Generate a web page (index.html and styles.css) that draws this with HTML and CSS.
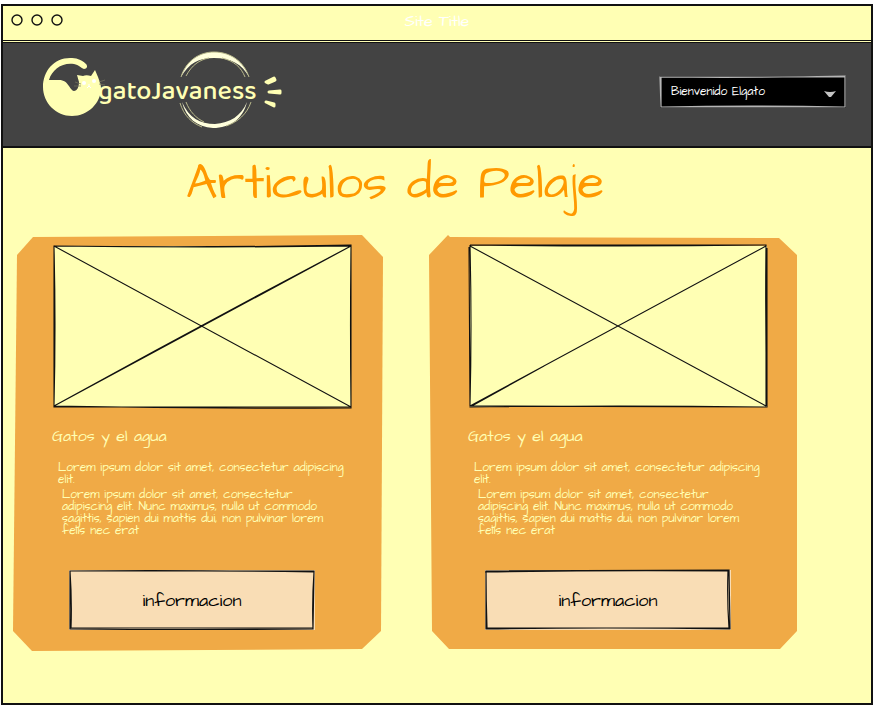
FILE: index.html
```html
<!DOCTYPE html>
<html lang="es">
<head>
<meta charset="utf-8">
<meta name="viewport" content="width=device-width, initial-scale=1">
<title>Articulos de Pelaje</title>
<link rel="stylesheet" href="styles.css">
</head>
<body>
<div class="window">
  <div class="titlebar">
    <svg class="dots" width="54" height="14" viewBox="0 0 54 14" aria-hidden="true">
      <circle cx="7" cy="6" r="5"/>
      <circle cx="27" cy="6" r="5"/>
      <circle cx="47" cy="6" r="5"/>
    </svg>
    <span class="site-title">Site Title</span>
  </div>

  <header class="header">
    <svg class="logo" width="244" height="84" viewBox="40 48 244 84" role="img" aria-label="gatoJavaness">
      <path class="cream" d="M49 80C52 69 63 62 74 64C79 65 81 68 84 69C87 69 88 66 86 64C81 59 76 58 70 58C54 58 43 71 43 87C43 103 56 116 72 116C88 116 101 103 101 88C101 84 99 80 98 77L95 70L91 76C88 75 85 75 83 76L77 75L79 82C79 87 77 91 74 91C69 90 69 80 59 80Z"/>
      <path class="whisker" d="M81 84L75 82M81 86L74 86M99 82L105 80M99 84L105 85"/>
      <circle class="white" cx="84" cy="83" r="2"/>
      <circle class="white" cx="94" cy="81" r="2"/>
      <path class="mouth" d="M88 85L90 85M89 86L87 88M89 86L91 88"/>
      <path class="ring" d="M181 77C186 61 199 52 214 52C231 52 244 62 249 77C242 64 231 58 214 58C199 58 189 63 181 77Z"/>
      <path class="ring-line" d="M181 77C186 61 199 52 214 52C231 52 244 62 249 77M186 76C192 65 199 60 209 58M222 58C234 61 241 67 245 77"/>
      <path class="ring" d="M182 102C189 118 200 124 215 124C230 123 241 116 247 102C243 119 230 128 213 128C197 127 186 118 182 102Z"/>
      <path class="ring-line" d="M180 103C184 116 192 123 202 127M186 102C190 112 196 118 204 122M226 126C238 122 247 114 251 102"/>
      <text class="logo-text" x="98" y="99">gatoJavaness</text>
      <path class="ray" d="M266 82L274 78L275 80L268 83ZM269 92L280 91L280 93ZM266 102L274 104L274 106Z"/>
    </svg>

    <div class="picker">
      <select class="picker-select" aria-label="Usuario">
        <option>Bienvenido Elgato</option>
      </select>
      <svg class="picker-arrow" width="12" height="7" viewBox="0 0 12 7" aria-hidden="true"><path d="M0 0Q6 2 12 0L7 6H5Z"/></svg>
      <svg class="sketch sketch-light" viewBox="0 0 186 32" preserveAspectRatio="none" aria-hidden="true"><path d="M0 1L185 1L185 31L1 31ZM1 1Q95 2 185 0L185 31Q90 29 1 31Z"/></svg>
    </div>
  </header>

  <main class="content">
    <h1 class="heading">Articulos de Pelaje</h1>
    <div class="cards">
      <article class="card">
        <svg class="card-shape" viewBox="0 0 370 416" preserveAspectRatio="none" aria-hidden="true"><path d="M20 2L349 0L370 22L368 396L349 414L19 416L0 396L4 20Z"/></svg>
        <svg class="media" viewBox="0 0 299 164" role="img" aria-label="Imagen">
          <path class="media-fill" d="M1 1H298V162H1Z"/>
          <path class="media-line" d="M1 1Q150 3 298 1Q297 80 298 163Q150 164 1 161Q3 80 1 1ZM1 1Q150 3 298 0L298 162L1 162ZM1 1L298 162M1 161Q150 79 298 1M1 161Q150 81 298 1"/>
        </svg>
        <h2 class="card-title">Gatos y el agua</h2>
        <p class="lead">Lorem ipsum dolor sit amet, consectetur adipiscing<br>elit.</p>
        <p class="body-text">Lorem ipsum dolor sit amet, consectetur<br>adipiscing elit. Nunc maximus, nulla ut commodo<br>sagittis, sapien dui mattis dui, non pulvinar lorem<br>felis nec erat</p>
        <button class="action" type="button">informacion
          <svg class="sketch" viewBox="0 0 246 60" preserveAspectRatio="none" aria-hidden="true"><path d="M1 1Q120 0 245 2Q243 30 244 59Q120 60 1 59ZM1 1L245 1L244 58L2 58Q3 30 1 1Z"/></svg>
        </button>
      </article>

      <article class="card">
        <svg class="card-shape" viewBox="0 0 370 416" preserveAspectRatio="none" aria-hidden="true"><path d="M19 0L21 2L350 3L368 20L368 396L351 414L20 414L3 396L0 20Z"/></svg>
        <svg class="media" viewBox="0 0 299 164" role="img" aria-label="Imagen">
          <path class="media-fill" d="M1 1H298V162H1Z"/>
          <path class="media-line" d="M1 0L297 0Q296 80 298 162Q150 160 1 162L0 2M1 0Q150 2 297 0L297 161M298 3L298 162L1 161Q3 80 1 0M1 1L297 161M1 161L297 1M1 162L75 121"/>
        </svg>
        <h2 class="card-title">Gatos y el agua</h2>
        <p class="lead">Lorem ipsum dolor sit amet, consectetur adipiscing<br>elit.</p>
        <p class="body-text">Lorem ipsum dolor sit amet, consectetur<br>adipiscing elit. Nunc maximus, nulla ut commodo<br>sagittis, sapien dui mattis dui, non pulvinar lorem<br>felis nec erat</p>
        <button class="action" type="button">informacion
          <svg class="sketch" viewBox="0 0 246 60" preserveAspectRatio="none" aria-hidden="true"><path d="M1 1L244 0L245 59Q120 57 1 59ZM0 2Q120 0 243 1Q242 30 244 58L2 58Q1 30 1 1"/></svg>
        </button>
      </article>
    </div>
  </main>
</div>
</body>
</html>
```
FILE: styles.css
```css
* {
  box-sizing: border-box;
}

body {
  margin: 0;
  padding: 4px 2px 2px 1px;
  background: #fff;
  font-family: "Architects Daughter", Lato, sans-serif;
}

.window {
  min-height: calc(100vh - 6px);
  border: 2px solid #111;
  background: #ffffb4;
}

.titlebar {
  display: grid;
  grid-template-columns: 1fr auto 1fr;
  align-items: center;
  height: 35px;
  padding: 0 7px 4px;
  border-bottom: 1px solid #111;
}

.dots {
  fill: none;
  stroke: #111;
  stroke-width: 1.4;
}

.site-title {
  color: #fff;
  font-size: 16px;
  line-height: 20px;
}

.header {
  display: flex;
  align-items: center;
  justify-content: space-between;
  height: 106px;
  margin-top: 1px;
  padding: 0 25px 0 37px;
  border-top: 1px solid #111;
  border-bottom: 2px solid #111;
  background: #434343;
}

.logo {
  margin-bottom: 9px;
}

.cream {
  fill: #ffffb4;
}

.white {
  fill: #fff;
}

.whisker {
  fill: none;
  stroke: #77775f;
  stroke-width: 0.7;
}

.mouth {
  fill: none;
  stroke: #fff;
}

.ring {
  fill: #ffffdc;
}

.ring-line {
  fill: none;
  stroke: #b9b98b;
}

.ray {
  fill: #ffffb4;
  stroke: #ffffb4;
  stroke-width: 3;
  stroke-linejoin: round;
}

.logo-text {
  fill: #ffffb4;
  font-family: "Baloo 2", Quicksand, Lato, sans-serif;
  font-size: 27px;
  font-weight: 500;
}

.picker {
  position: relative;
  width: 186px;
  margin-bottom: 6px;
}

.picker-select {
  display: block;
  width: 100%;
  height: 32px;
  padding: 0 28px 0 11px;
  border: 0;
  border-radius: 0;
  background: #000;
  color: #fff;
  font-family: inherit;
  font-size: 12px;
  appearance: none;
}

.picker-arrow {
  position: absolute;
  top: 15px;
  right: 10px;
  fill: #c4c4c4;
  pointer-events: none;
}

.sketch {
  position: absolute;
  inset: 0;
  width: 100%;
  height: 100%;
  overflow: visible;
  fill: none;
  stroke: #111;
  stroke-width: 1.2;
  pointer-events: none;
}

.sketch-light {
  stroke: #b5b5b5;
}

.content {
  padding: 0 72px 50px 10px;
}

.heading {
  margin: 0;
  padding-left: 50px;
  padding-right: 72px;
  color: #ff9900;
  font-size: 49px;
  font-weight: 400;
  line-height: 72px;
  text-align: center;
}

.cards {
  display: grid;
  grid-template-columns: repeat(2, minmax(0, 1fr));
  gap: 46px;
  margin-top: 15px;
}

.card {
  position: relative;
  display: flex;
  flex-direction: column;
  padding: 10px 31px 21px 39px;
  color: #ffffb4;
}

.card-shape {
  position: absolute;
  inset: 0;
  width: 100%;
  height: 100%;
  fill: #f0aa46;
}

.media,
.card-title,
.lead,
.body-text,
.action {
  position: relative;
}

.media {
  display: block;
  margin-left: 1px;
  overflow: visible;
}

.media-fill {
  fill: #ffffb4;
}

.media-line {
  fill: none;
  stroke: #111;
  stroke-width: 1.1;
}

.card-title {
  margin: 17px 0 16px;
  font-size: 16px;
  font-weight: 400;
  line-height: 20px;
}

.lead,
.body-text {
  margin: 0 0 0 6px;
  font-size: 12px;
  line-height: 12px;
  white-space: nowrap;
}

.lead {
  margin-bottom: 3px;
}

.body-text {
  margin-left: 10px;
}

.action {
  height: 60px;
  margin: 33px 37px 0 17px;
  padding: 0;
  border: 0;
  background: #f9ddb5;
  color: #000;
  font-family: inherit;
  font-size: 18px;
}
```
